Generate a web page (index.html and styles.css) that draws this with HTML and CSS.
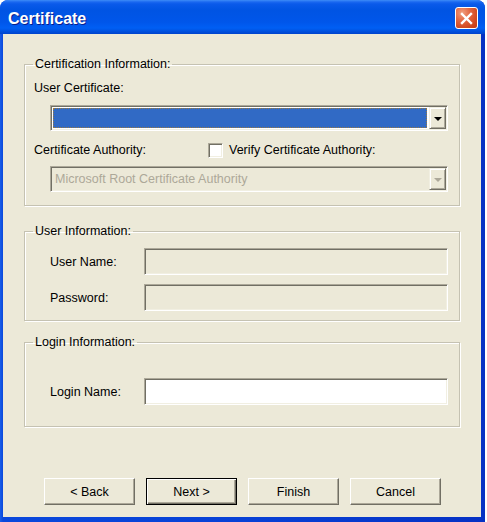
FILE: index.html
```html
<!DOCTYPE html>
<html>
<head>
<meta charset="utf-8">
<title>Certificate</title>
<link rel="stylesheet" href="styles.css">
</head>
<body>
<div class="window">
  <div class="titlebar">
    <span class="title">Certificate</span>
    <button class="close" aria-label="Close">
      <svg width="13" height="13" viewBox="0 0 13 13"><path d="M2 2 L11 11 M11 2 L2 11" stroke="#fff" stroke-width="2.4" stroke-linecap="square"/></svg>
    </button>
  </div>
  <div class="client">
    <fieldset class="group g1">
      <legend>Certification Information:</legend>
      <div class="label-row">User Certificate:</div>
      <div class="combo">
        <span class="combo-sel"></span>
        <span class="drop"><span class="tri"></span></span>
      </div>
      <div class="ca-row">
        <span class="ca-label">Certificate Authority:</span>
        <span class="check"></span>
        <span class="check-label">Verify Certificate Authority:</span>
      </div>
      <div class="combo disabled">
        <span class="combo-text">Microsoft Root Certificate Authority</span>
        <span class="drop"><span class="tri"></span></span>
      </div>
    </fieldset>

    <fieldset class="group g2">
      <legend>User Information:</legend>
      <div class="field-row first">
        <span class="field-label">User Name:</span>
        <span class="field disabled"></span>
      </div>
      <div class="field-row second">
        <span class="field-label">Password:</span>
        <span class="field disabled"></span>
      </div>
    </fieldset>

    <fieldset class="group g3">
      <legend>Login Information:</legend>
      <div class="field-row login">
        <span class="field-label">Login Name:</span>
        <span class="field"></span>
      </div>
    </fieldset>

    <div class="buttons">
      <button class="btn">&lt; Back</button>
      <button class="btn default">Next &gt;</button>
      <button class="btn">Finish</button>
      <button class="btn">Cancel</button>
    </div>
  </div>
</div>
</body>
</html>
```

FILE: styles.css
```css
html, body {
  margin: 0;
  padding: 0;
  background: #ffffff;
}

body {
  font-family: "Liberation Sans", Arial, sans-serif;
  font-size: 12.5px;
  color: #000;
}

.window {
  width: 485px;
  height: 522px;
  display: flex;
  flex-direction: column;
  border-radius: 8px 8px 0 0;
  background: linear-gradient(to right, #1a5ee8 0px, #0a48dc 3px, #0841d6 50%, #0631c4 100%);
  overflow: hidden;
}

.titlebar {
  height: 34px;
  box-sizing: border-box;
  display: flex;
  align-items: center;
  padding: 2px 7px 0 8px;
  background: linear-gradient(to bottom, #3d8cf7 0px, #1a68f0 2px, #0a5aea 4px, #0054e3 10px, #0056ea 22px, #005ff4 28px, #0052e0 31px, #0043cc 34px);
  flex: none;
}

.title {
  flex: 1;
  color: #fff;
  font-weight: bold;
  font-size: 16px;
  line-height: 18px;
  margin-top: 2px;
  text-shadow: 1px 1px 0 #0a1e8c;
}

.close {
  width: 23px;
  height: 22px;
  box-sizing: border-box;
  padding: 0;
  margin: 0;
  border: 1px solid #fff;
  border-radius: 3px;
  background: radial-gradient(circle at 30% 25%, #f0a080 0%, #e46a45 35%, #d24b22 70%, #c13a14 100%);
  display: flex;
  align-items: center;
  justify-content: center;
}

.close svg {
  display: block;
}

.client {
  flex: 1;
  margin: 0 4px 5px 3px;
  background: #ece9d8;
  padding: 23px 21px 0 21px;
}

.group {
  margin: 0;
  padding: 0 11px 0 9px;
  border: 1px solid #c5c2b2;
  box-shadow: 1px 1px 0 #fff, inset 1px 1px 0 #fff;
  min-width: 0;
}

.group legend {
  padding: 0 2px;
  margin-left: -1px;
  line-height: 14px;
}

.g1 { padding-bottom: 13px; }
.g2 { margin-top: 18px; padding-bottom: 9px; }
.g3 { margin-top: 14px; padding-bottom: 21px; }

.label-row {
  margin-top: 10px;
  line-height: 14px;
}

.combo {
  margin: 10px 0 0 16px;
  width: 398px;
  height: 26px;
  box-sizing: border-box;
  border: 1px solid;
  border-color: #aca899 #fff #fff #aca899;
  box-shadow: inset 1px 1px 0 #716f64, inset -1px -1px 0 #f1efe2;
  padding: 1px;
  display: flex;
  background: #fff;
}

.combo-sel {
  flex: 1;
  margin: 1px 2px 1px 1px;
  background: #316ac5;
  border: 1px dotted #9a7a40;
}

.combo.disabled {
  margin-top: 8px;
  background: #ece9d8;
}

.combo-text {
  flex: 1;
  color: #aca899;
  line-height: 22px;
  padding-left: 3px;
  white-space: nowrap;
  overflow: hidden;
}

.drop {
  width: 17px;
  box-sizing: border-box;
  border: 1px solid;
  border-color: #f1efe2 #716f64 #716f64 #f1efe2;
  box-shadow: inset 1px 1px 0 #fff, inset -1px -1px 0 #aca899;
  background: #ece9d8;
  display: flex;
  align-items: center;
  justify-content: center;
}

.tri {
  width: 0;
  height: 0;
  border-left: 4px solid transparent;
  border-right: 4px solid transparent;
  border-top: 4px solid #000;
  margin-top: 1px;
}

.disabled .tri {
  border-top-color: #aca899;
}

.ca-row {
  margin-top: 11px;
  height: 16px;
  display: flex;
  align-items: center;
}

.ca-label {
  width: 174px;
  flex: none;
}

.check {
  width: 15px;
  height: 15px;
  box-sizing: border-box;
  border: 1px solid;
  border-color: #aca899 #fff #fff #aca899;
  box-shadow: inset 1px 1px 0 #716f64, inset -1px -1px 0 #f1efe2;
  background: #fff;
  flex: none;
}

.check-label {
  margin-left: 6px;
}

.field-row {
  display: flex;
  align-items: center;
}

.field-row.first { margin-top: 10px; }
.field-row.second { margin-top: 9px; }
.field-row.login { margin-top: 29px; }

.field-label {
  width: 94px;
  padding-left: 16px;
  flex: none;
}

.field {
  width: 304px;
  height: 27px;
  box-sizing: border-box;
  border: 1px solid;
  border-color: #aca899 #fff #fff #aca899;
  box-shadow: inset 1px 1px 0 #716f64, inset -1px -1px 0 #f1efe2;
  background: #fff;
}

.field.disabled {
  background: #ece9d8;
}

.buttons {
  margin: 51px 0 0 20px;
  display: flex;
  gap: 11px;
}

.btn {
  width: 91px;
  height: 27px;
  box-sizing: border-box;
  margin: 0;
  padding: 0;
  font-family: "Liberation Sans", Arial, sans-serif;
  font-size: 12.5px;
  color: #000;
  background: #ece9d8;
  border: 1px solid;
  border-color: #fff #716f64 #716f64 #fff;
  box-shadow: inset -1px -1px 0 #aca899;
}

.btn.default {
  border-color: #000;
  box-shadow: inset 1px 1px 0 #fff, inset -1px -1px 0 #716f64, inset -2px -2px 0 #aca899;
}
```
